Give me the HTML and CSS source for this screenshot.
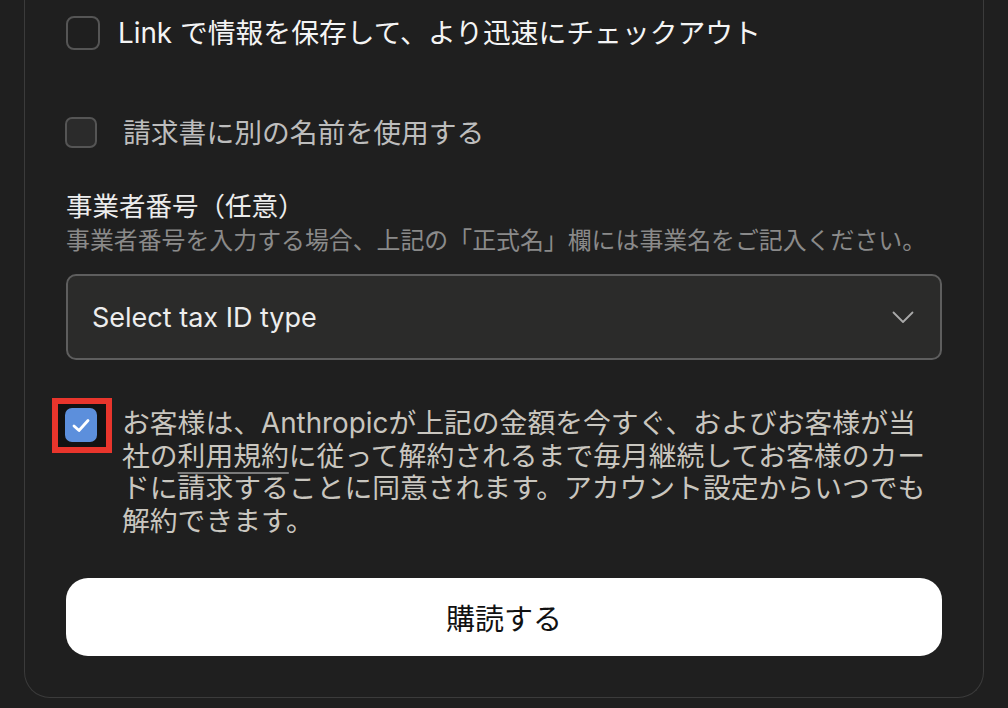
FILE: index.html
```html
<!DOCTYPE html>
<html lang="ja">
<head>
<meta charset="utf-8">
<title>購読</title>
<link rel="stylesheet" href="styles.css">
</head>
<body>
<div class="card">
  <label class="row row-link">
    <span class="box box-empty"></span>
    <span class="row-text text-bright">Link で情報を保存して、より迅速にチェックアウト</span>
  </label>

  <label class="row row-name">
    <span class="box box-filled"></span>
    <span class="row-text text-dim">請求書に別の名前を使用する</span>
  </label>

  <div class="field">
    <div class="field-label">事業者番号（任意）</div>
    <div class="field-help">事業者番号を入力する場合、上記の「正式名」欄には事業名をご記入ください。</div>
    <div class="select">
      <span class="select-text">Select tax ID type</span>
      <svg class="chevron" width="22" height="13" viewBox="0 0 22 13" aria-hidden="true">
        <path d="M1.5 1.5 L11 11 L20.5 1.5" fill="none" stroke="#a9a9a9" stroke-width="1.8" stroke-linecap="round" stroke-linejoin="round"/>
      </svg>
    </div>
  </div>

  <div class="consent">
    <span class="consent-box-wrap">
      <span class="box box-checked">
        <svg width="18" height="15" viewBox="0 0 18 15" aria-hidden="true">
          <path d="M2 8 L7 12.5 L16 2.5" fill="none" stroke="#ffffff" stroke-width="2.8" stroke-linecap="round" stroke-linejoin="round"/>
        </svg>
      </span>
      <span class="highlight"></span>
    </span>
    <p class="consent-text">お客様は、Anthropicが上記の金額を今すぐ、およびお客様が当<br>社の<span class="terms">利用規約</span>に従って解約されるまで毎月継続してお客様のカー<br>ドに請求することに同意されます。アカウント設定からいつでも<br>解約できます。</p>
  </div>

  <button class="subscribe" type="button">購読する</button>
</div>
</body>
</html>
```

FILE: styles.css
```css
html, body {
  margin: 0;
  padding: 0;
  background: #1f1f1f;
}

body {
  font-family: "Inter", "Noto Sans CJK JP", sans-serif;
  height: 708px;
  overflow: hidden;
}

.card {
  box-sizing: border-box;
  margin: 0 24px;
  width: 960px;
  height: 698px;
  border: 1px solid #3b3b3b;
  border-top: none;
  border-radius: 0 0 26px 26px;
  padding: 16px 41px 0 41px;
}

.row {
  display: flex;
  align-items: center;
}

.row-link {
  height: 34px;
}

.row-name {
  margin-top: 67px;
  height: 31px;
}

.box {
  box-sizing: border-box;
  flex: none;
  display: flex;
  align-items: center;
  justify-content: center;
}

.box-empty {
  width: 34px;
  height: 34px;
  border: 2px solid #555555;
  border-radius: 8px;
  margin-right: 18px;
}

.box-filled {
  width: 32px;
  height: 31px;
  border: 2px solid #555555;
  border-radius: 7px;
  background: #2b2b2b;
  margin-left: -1px;
  margin-right: 26px;
}

.row-text {
  font-size: 27.8px;
  line-height: 34px;
  white-space: nowrap;
}

.text-bright {
  color: #f4f4f4;
}

.text-dim {
  color: #bdbdbd;
}

.field {
  margin-top: 40px;
}

.field-label {
  font-size: 26.5px;
  line-height: 36px;
  color: #ececec;
}

.field-help {
  margin-top: 2px;
  font-size: 23.9px;
  line-height: 30px;
  color: #8a8a8a;
  white-space: nowrap;
}

.select {
  box-sizing: border-box;
  margin-top: 18px;
  height: 86px;
  border: 2px solid #5e5e5e;
  border-radius: 10px;
  background: #2b2b2a;
  display: flex;
  align-items: center;
  justify-content: space-between;
  padding: 0 26px 0 24px;
}

.select-text {
  font-size: 27px;
  color: #ededed;
}

.chevron {
  display: block;
}

.consent {
  margin-top: 48px;
  display: flex;
  align-items: flex-start;
}

.consent-box-wrap {
  position: relative;
  flex: none;
  margin-right: 25px;
  margin-left: -1px;
}

.box-checked {
  position: relative;
  z-index: 1;
  width: 32px;
  height: 34px;
  border-radius: 7px;
  background: #5c8fdc;
}

.highlight {
  position: absolute;
  z-index: 0;
  left: -13px;
  top: -10px;
  width: 60px;
  height: 55px;
  box-sizing: border-box;
  border: 6px solid #e8352c;
  background: #121212;
  pointer-events: none;
}

.consent-text {
  margin: -1px 0 0 0;
  font-size: 27.8px;
  line-height: 32.5px;
  color: #c9c6bf;
  white-space: nowrap;
}

.terms {
  text-decoration: underline;
  text-decoration-color: #7a7a7a;
  text-decoration-thickness: 1.5px;
  text-underline-offset: 6px;
}

.subscribe {
  display: flex;
  align-items: center;
  justify-content: center;
  width: 100%;
  height: 78px;
  margin-top: 41px;
  border: none;
  border-radius: 22px;
  background: #ffffff;
  color: #111111;
  font-family: "Noto Sans CJK JP", sans-serif;
  font-size: 29px;
  font-weight: 400;
  padding: 0;
}
```
